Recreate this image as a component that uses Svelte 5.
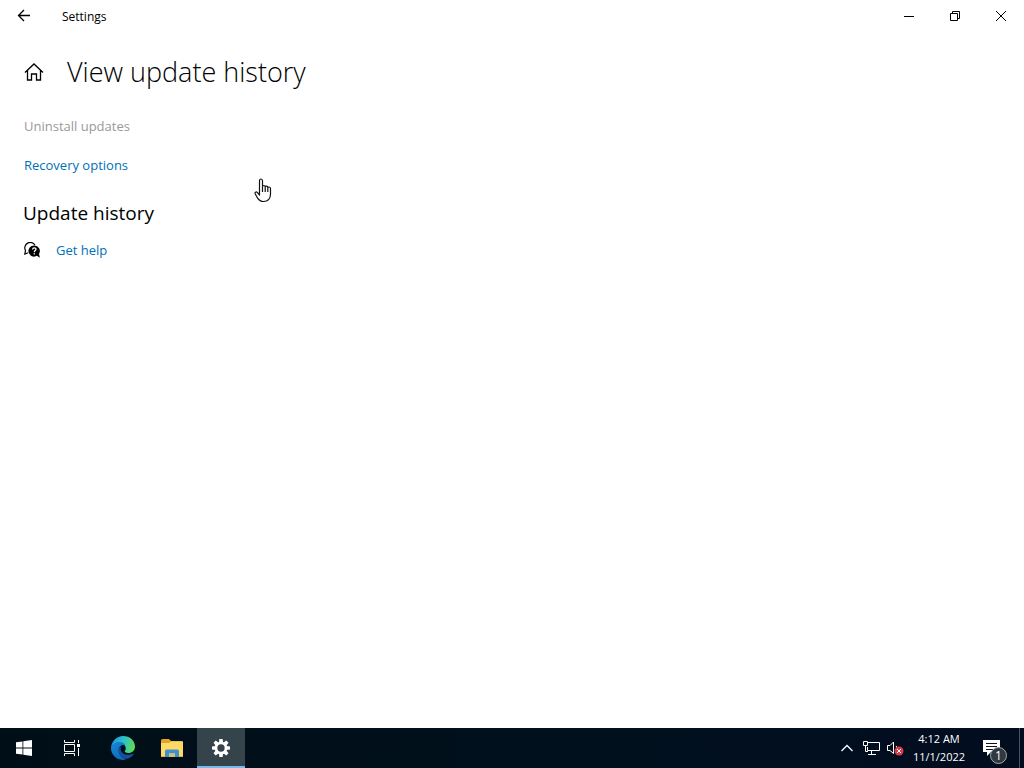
<script>
  const time = '4:12 AM';
  const date = '11/1/2022';
  const notifications = 1;
</script>

<div class="desktop">
  <section class="window" aria-label="Settings">
    <header class="titlebar">
      <button class="caption" aria-label="Back">
        <svg width="14" height="14" viewBox="0 0 14 14"><path d="M13 6.5H1.500M7 1 1.500 6.500 7 12" stroke-width="1.300" /></svg>
      </button>
      <span class="app-name">Settings</span>
      <button class="caption" aria-label="Minimize">
        <svg width="10" height="10" viewBox="0 0 10 10"><path d="M0 5.5h10" /></svg>
      </button>
      <button class="caption" aria-label="Restore">
        <svg width="10" height="10" viewBox="0 0 10 10"><path d="M.5 2.5h7v7h-7zM2.5 2.5v-2h7v7h-2" /></svg>
      </button>
      <button class="caption" aria-label="Close">
        <svg width="10" height="10" viewBox="0 0 10 10"><path d="M0 0l10 10M10 0 0 10" /></svg>
      </button>
    </header>

    <main>
      <div class="heading">
        <button class="home" aria-label="Home">
          <svg width="20" height="18" viewBox="0 0 20 18"><path d="M1 9.400 10 1l9 8.400M3.500 7.500v9.500h4v-6h5v6h4V7.500" stroke-width="1.300" /></svg>
        </button>
        <h1>View update history</h1>
      </div>
      <button class="action" disabled>Uninstall updates</button>
      <a class="action" href="#recovery">Recovery options</a>
      <h2>Update history</h2>
      <a class="help" href="#help">
        <svg width="16" height="16" viewBox="0 0 16 16">
          <path d="M11 3.200A5.300 5.300 0 0 0 1.500 8.500L.8 12l3.400-1.200" fill="none" stroke="#000" stroke-width="1.200" />
          <path d="M10.300 3.400a5.600 5.600 0 1 0 2.600 10.400l3 1.900-.9-3.800a5.600 5.600 0 0 0-4.700-8.500Z" />
          <path d="M8.600 7.400c0-2.200 3.500-2.100 3.400-.1 0 1.200-1.700 1.300-1.700 2.900M10.300 11.200v1.400" fill="none" stroke="#fff" stroke-width="1.300" />
        </svg>
        <span>Get help</span>
      </a>
    </main>
  </section>

  <footer class="taskbar">
    <button class="task" aria-label="Start">
      <svg width="16" height="16" viewBox="0 0 16 16" fill="#fff"><path d="M0 2.300 6.500 1.400v6.100H0zM7.300 1.300 16 0v7.500H7.300zM0 8.400h6.500v6.200L0 13.700zM7.300 8.400H16V16l-8.700-1.300z" /></svg>
    </button>
    <button class="task" aria-label="Task View">
      <svg width="16" height="16" viewBox="0 0 16 16" fill="none" stroke="#fff"><path d="M.5 0v2.500h10V0M.5 4.500h10v7H.5zM.5 16v-2.500h10V16M14.500 0v3M14.500 8v8" /><path d="M13 4h3v3h-3z" fill="#fff" stroke="none" /></svg>
    </button>
    <button class="task edge" aria-label="Microsoft Edge">
      <svg width="24" height="24" viewBox="0 0 24 24">
        <defs>
          <linearGradient id="edge-top" x1="0" y1=".3" x2="1" y2=".5"><stop offset="0" stop-color="#1a91dc" /><stop offset=".5" stop-color="#2bc2c9" /><stop offset="1" stop-color="#62d957" /></linearGradient>
          <linearGradient id="edge-base" x1="0" y1="0" x2=".8" y2="1"><stop offset="0" stop-color="#1688d8" /><stop offset="1" stop-color="#0c66b8" /></linearGradient>
        </defs>
        <path d="M0 12C.4 5 5.6 0 12 0c7 0 12 4.800 12 10.500 0 4-3 6.500-6.500 6.500-3 0-4.200-1.200-3.700-2 2.400-3 .2-7.600-4.600-7.600C4.700 7.400.8 9 0 12Z" fill="url(#edge-top)" />
        <path d="M0 12c.5-3.500 4.200-6 8.200-6 3.200 0 5.500 1.500 6.400 3.600-3.600-1.900-7.200 1-6.800 5.200.4 4.200 3.500 7.500 7.700 8.500C7.500 26-.2 19.800 0 12Z" fill="url(#edge-base)" />
        <path d="M10 10.200c-3.600 2.200-3.200 7.100-.2 10.100 3.900 4 9.600 2.700 12.700-1.800.4-.7 0-1.200-.7-.8-4.900 2.500-11.300.5-12-3.800-.2-1.500 0-2.600.2-3.700Z" fill="#12529b" />
      </svg>
    </button>
    <button class="task" aria-label="File Explorer">
      <svg width="22" height="19" viewBox="0 0 22 19">
        <path d="M0 1.500Q0 0 1.500 0H8l2 2h10.500Q22 2 22 3.500V6H0z" fill="#e3a328" />
        <path d="M0 4h8l2-1.500h12V18H0z" fill="#ffd968" />
        <path d="M4 18v-6q0-1.500 1.500-1.500h11Q18 10.500 18 12v6h-4v-3.500H8V18z" fill="#3f91cc" />
        <path d="M8 14.500h6V18H8z" fill="#cfc07a" />
        <path d="M0 17h4v1H0zM18 17h4v1h-4z" fill="#eab443" />
      </svg>
    </button>
    <button class="task active" aria-label="Settings">
      <svg width="18" height="18" viewBox="-9 -9 18 18">
        <g fill="#fff">
          {#each [0, 45, 90, 135, 180, 225, 270, 315] as angle}
            <path d="M-2.100-5 -1.600-9H1.600L2.100-5z" transform="rotate({angle})" />
          {/each}
        </g>
        <circle r="5" fill="none" stroke="#fff" stroke-width="2.700" />
      </svg>
    </button>

    <div class="tray">
      <button class="tray-icon" aria-label="Show hidden icons">
        <svg width="12" height="8" viewBox="0 0 12 8" fill="none" stroke="#fff" stroke-width="1.300"><path d="M.5 7 6 1.500 11.500 7" /></svg>
      </button>
      <button class="tray-icon" aria-label="Network">
        <svg width="17" height="14" viewBox="0 0 17 14" fill="none" stroke="#fff"><path d="M5 1.500h11.500v8h-12V6M.5.5h4v4h-4zM2.500 4.500v6H5M8.500 9.500v4M5 13.500h8" /></svg>
      </button>
      <button class="tray-icon" aria-label="Volume muted">
        <svg width="17" height="15" viewBox="0 0 17 15" fill="none" stroke="#fff"><path d="M6.500 12.500 3 9.500H.5v-5H3l3.500-3.500zM9 5q1 1 1 2" /><circle cx="12" cy="10" r="4.500" fill="#d43b46" stroke="none" /><path d="m10 8 4 4m0-4-4 4" /></svg>
      </button>
      <button class="clock"><span>{time}</span><span>{date}</span></button>
      <button class="notify" aria-label="Notifications">
        <svg width="17" height="16" viewBox="0 0 17 16"><path d="M0 0h17v12H8l-4 4v-4H0z" fill="#fff" /><path d="M3 3.500h11M3 6.500h11M3 9.500h7" stroke="#071426" /></svg>
        <span class="badge">{notifications}</span>
      </button>
      <button class="peek" aria-label="Show desktop"></button>
    </div>
  </footer>

  <svg class="pointer" width="19" height="25" viewBox="0 0 19 25">
    <path d="M5.500 15V3Q5.500 1 7 1t1.500 2v6.500-1q0-1 1.300-1t1.400 1.200V10 9q0-.8 1.300-.8t1.300 1.200v1-.6q0-.8 1.300-.8t1.400 1.500V16c0 5-2.500 7.500-7 7.500-3.800 0-4.700-1.500-6-3.500L1.300 16c-.8-1.800.8-2.600 2-1.600L5.500 17zM8.500 9.500V14M11.200 10v4M13.800 10.500V14" fill="#fff" stroke="#111" stroke-width="1.200" stroke-linejoin="round" />
  </svg>
</div>

<style>
  :global(body) {
    margin: 0;
  }
  .desktop {
    position: relative;
    display: flex;
    flex-direction: column;
    min-height: 100vh;
    background: #fff;
    color: #000;
    font-family: 'Segoe UI', 'Open Sans', 'Noto Sans', sans-serif;
    font-size: 13px;
  }
  button {
    padding: 0;
    border: 0;
    background: none;
    color: inherit;
    font: inherit;
  }
  svg {
    display: block;
    flex: none;
  }
  .window {
    flex: 1;
  }
  .titlebar {
    display: flex;
    height: 32px;
  }
  .caption {
    display: grid;
    place-items: center;
    width: 46px;
  }
  .caption svg,
  .home svg {
    fill: none;
    stroke: #000;
  }
  .app-name {
    flex: 1;
    padding-left: 16px;
    font-size: 12px;
    line-height: 34px;
  }
  .caption:first-child {
    width: 48px;
    margin-right: -2px;
  }
  main {
    display: flex;
    flex-direction: column;
    align-items: flex-start;
    padding: 20px 24px;
  }
  .heading {
    display: flex;
    align-items: center;
    gap: 23px;
    margin-bottom: 24px;
  }
  h1 {
    margin: 0;
    font-size: 27px;
    font-weight: 350;
    line-height: 40px;
  }
  .action {
    margin-bottom: 19px;
    line-height: 20px;
  }
  a {
    color: #0070b8;
    text-decoration: none;
  }
  .action:disabled {
    color: #999;
  }
  h2 {
    margin: 6px 0 14px -1px;
    font-size: 19px;
    font-weight: 400;
    line-height: 26px;
  }
  .help {
    display: flex;
    align-items: center;
    gap: 16px;
    line-height: 20px;
  }
  .taskbar {
    display: flex;
    height: 40px;
    background: linear-gradient(90deg, #000e17, #00101c 55%, #020d20);
    color: #fff;
    font-size: 11px;
  }
  .task {
    display: grid;
    place-items: center;
    width: 48px;
    margin-right: 1px;
  }
  .task:first-child {
    margin-right: 0;
  }
  .edge {
    margin-left: 2px;
  }
  .active {
    background: #35434a;
    box-shadow: inset 0 -2px #76b9ed;
  }
  .tray {
    display: flex;
    margin-left: auto;
  }
  .tray-icon {
    display: grid;
    place-items: center;
    width: 24px;
  }
  .clock {
    display: flex;
    flex-direction: column;
    justify-content: center;
    align-items: center;
    width: 64px;
    line-height: 18px;
  }
  .notify {
    position: relative;
    display: grid;
    place-items: center;
    width: 48px;
    padding-right: 8px;
  }
  .badge {
    position: absolute;
    top: 19px;
    left: 19px;
    width: 15px;
    border: 1px solid #a5a9ad;
    border-radius: 50%;
    background: #303840;
    font-size: 12px;
    line-height: 15px;
  }
  .peek {
    width: 5px;
    border-left: 1px solid #46515c;
  }
  .pointer {
    position: absolute;
    top: 178px;
    left: 254px;
    pointer-events: none;
  }
</style>
